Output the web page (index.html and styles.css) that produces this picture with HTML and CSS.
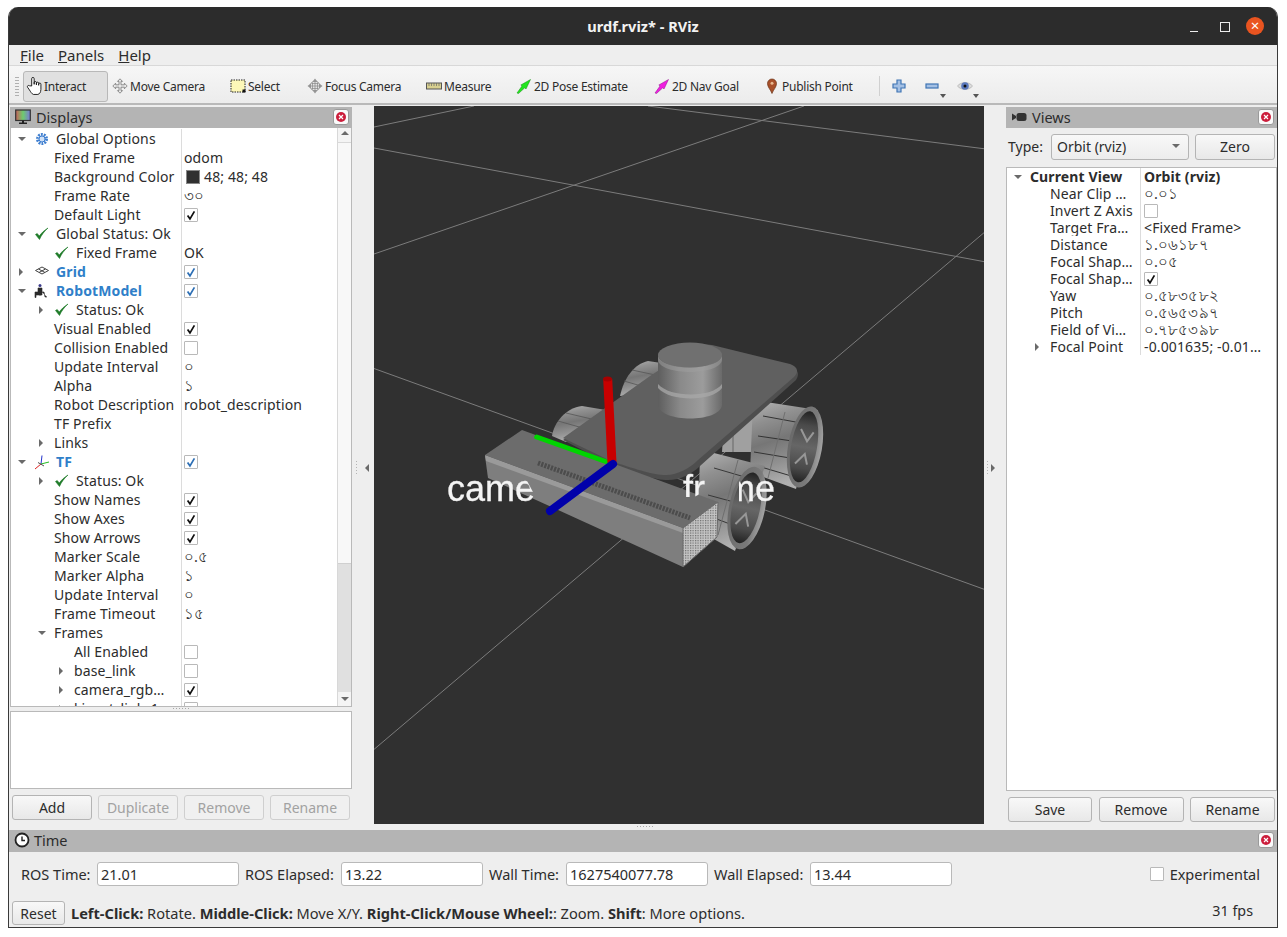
FILE: index.html
```html
<!DOCTYPE html>
<html lang="en">
<head>
<meta charset="utf-8">
<title>urdf.rviz* - RViz</title>
<link rel="stylesheet" href="styles.css">
</head>
<body>
<svg class="defs" aria-hidden="true">
  <symbol id="tick" viewBox="0 0 14 14"><path d="M3 7.500 L5.800 11.500 L11 2.800" fill="none" stroke="currentColor" stroke-width="2"/></symbol>
  <symbol id="ok" viewBox="0 0 16 16"><path d="M1.500 8.500 L5.500 13.500 C7.500 9 10 5.500 14 2 C10 4.500 7.500 7 5.300 10 L3.200 7.500 Z" fill="#1e7b28" stroke="#1e7b28" stroke-width=".6"/></symbol>
  <symbol id="close" viewBox="0 0 16 16"><rect x=".5" y=".5" width="15" height="15" rx="2.500" fill="#fafafa" stroke="#9a9a9a"/><circle cx="8" cy="8" r="5" fill="#cc1e3c"/><path d="M6 6 L10 10 M10 6 L6 10" stroke="#fff" stroke-width="1.200"/></symbol>
</svg>
<div class="window">
  <header class="titlebar">
    <span class="title">urdf.rviz* - RViz</span>
    <div class="winctl">
      <span class="min"></span><span class="max"></span><span class="xbtn">×</span>
    </div>
  </header>
  <nav class="menubar">
    <span><u>F</u>ile</span><span><u>P</u>anels</span><span><u>H</u>elp</span>
  </nav>
  <div class="toolbar">
    <span class="grip"></span>
    <div class="tool active">
      <svg class="ic hand" viewBox="1 1 13 16"><path d="M5 9 V2.500 a1.100 1.100 0 0 1 2.200 0 V7.500 V6 a1 1 0 0 1 2 0 V8 V6.600 a1 1 0 0 1 2 0 V8.400 V7.400 a1 1 0 0 1 2 0 V12 C13 15 12 16 10.500 16.500 H6.500 C5 16 4 14 3 12.500 L1.300 10 C.8 9 2 8 3 8.800 Z" fill="#fff" stroke="#111" stroke-width=".8"/></svg>
      <span>Interact</span>
    </div>
    <div class="tool">
      <svg class="ic" viewBox="0 0 16 16"><path d="M8 .8 L10.500 3.400 H9 V6.800 H12.400 V5.200 L15.200 8 L12.400 10.800 V9.200 H9 V12.600 H10.500 L8 15.200 L5.500 12.600 H7 V9.200 H3.600 V10.800 L.8 8 L3.600 5.200 V6.800 H7 V3.400 H5.500 Z" fill="#e8e8e8" stroke="#777" stroke-width=".8"/></svg>
      <span>Move Camera</span>
    </div>
    <div class="tool">
      <svg class="ic" viewBox="0 0 16 16"><rect x="1" y="2" width="14" height="12" fill="#fdf7b8" stroke="#222" stroke-width="1" stroke-dasharray="1.500 1"/><rect x="12.500" y="11.500" width="3" height="3" fill="#111"/></svg>
      <span>Select</span>
    </div>
    <div class="tool">
      <svg class="ic" viewBox="0 0 16 16"><path d="M8 .5 L10 3 H6 Z M8 15.500 L6 13 H10 Z M.5 8 L3 6 V10 Z M15.500 8 L13 10 V6 Z" fill="#999"/><circle cx="8" cy="8" r="4.800" fill="#e4e4e4" stroke="#888"/><path d="M8 3 V13 M3 8 H13 M5.500 5 V11 M10.500 5 V11 M5 5.500 H11 M5 10.500 H11" stroke="#888" stroke-width=".7"/></svg>
      <span>Focus Camera</span>
    </div>
    <div class="tool">
      <svg class="ic" viewBox="0 0 16 16"><rect x=".5" y="5" width="15" height="6" fill="#d8d090" stroke="#555"/><path d="M3 5 V8 M5.500 5 V8 M8 5 V8 M10.500 5 V8 M13 5 V8" stroke="#666" stroke-width=".7"/></svg>
      <span>Measure</span>
    </div>
    <div class="tool">
      <svg class="ic" viewBox="0 0 16 16"><path d="M1 15 L6 8 L4.800 7 L14.500 1.500 L10 11 L8.800 9.800 L2.500 15.500 Z" fill="#22e61e" stroke="#178c14" stroke-width=".5"/></svg>
      <span>2D Pose Estimate</span>
    </div>
    <div class="tool">
      <svg class="ic" viewBox="0 0 16 16"><path d="M1 15 L6 8 L4.800 7 L14.500 1.500 L10 11 L8.800 9.800 L2.500 15.500 Z" fill="#f01ee0" stroke="#8c148c" stroke-width=".5"/></svg>
      <span>2D Nav Goal</span>
    </div>
    <div class="tool">
      <svg class="ic" viewBox="0 0 16 16"><path d="M8 15.500 C6.500 11.500 3.500 9 3.500 5.500 A4.500 4.500 0 0 1 12.500 5.500 C12.500 9 9.500 11.500 8 15.500 Z" fill="#a8502a" stroke="#6b3317" stroke-width=".7"/><circle cx="8" cy="5.300" r="1.500" fill="#e8b890"/></svg>
      <span>Publish Point</span>
    </div>
    <span class="tsep"></span>
    <div class="tbtn">
      <svg class="ic" viewBox="0 0 16 16"><path d="M6 2 H10 V6 H14 V10 H10 V14 H6 V10 H2 V6 H6 Z" fill="#a4c0e4" stroke="#3f74b4" stroke-width="1.200"/></svg>
    </div>
    <div class="tbtn">
      <svg class="ic" viewBox="0 0 16 16"><rect x="2" y="6" width="12" height="4" fill="#a4c0e4" stroke="#3f74b4" stroke-width="1.200"/></svg>
      <span class="drop"></span>
    </div>
    <div class="tbtn">
      <svg class="ic" viewBox="0 0 16 16"><path d="M.5 8 C4 3.500 12 3.500 15.500 8 C12 12.500 4 12.500 .5 8 Z" fill="#dcdcdc" stroke="#aaa" stroke-width=".7"/><circle cx="8" cy="8" r="3.800" fill="#5a78bc"/><circle cx="8" cy="8" r="1.500" fill="#101010"/></svg>
      <span class="drop"></span>
    </div>
  </div>

  <main class="main">
    <section class="dock left">
      <div class="dockhead">
        <svg class="ic" viewBox="0 0 16 16"><defs><linearGradient id="rb" x1="0" x2="1"><stop offset="0" stop-color="#c8605a"/><stop offset=".5" stop-color="#6ecb6e"/><stop offset="1" stop-color="#7a78d8"/></linearGradient></defs><rect x=".7" y="1" width="14.600" height="10.500" fill="url(#rb)" stroke="#333" stroke-width="1.200"/><path d="M7 11.500 H9 V13.500 H12 V15 H4 V13.500 H7 Z" fill="#222"/></svg>
        <span class="dockname">Displays</span>
        <svg class="closeic"><use href="#close"/></svg>
      </div>
      <div class="treewrap">
        <div class="tree">
          <div class="row"><span class="name l0"><i class="arrow down"></i><svg class="ico" viewBox="0 0 16 16"><circle cx="8" cy="8" r="4.500" fill="none" stroke="#3f7fd0" stroke-width="3" stroke-dasharray="1.800 1"/><circle cx="8" cy="8" r="3" fill="#cfe0f5" stroke="#3f7fd0"/></svg>Global Options</span><span class="val"></span></div>
          <div class="row"><span class="name l1"><i class="arrow"></i>Fixed Frame</span><span class="val">odom</span></div>
          <div class="row"><span class="name l1"><i class="arrow"></i>Background Color</span><span class="val"><i class="swatch"></i>48; 48; 48</span></div>
          <div class="row"><span class="name l1"><i class="arrow"></i>Frame Rate</span><span class="val my">৩০</span></div>
          <div class="row"><span class="name l1"><i class="arrow"></i>Default Light</span><span class="val"><span class="cb"><svg><use href="#tick"/></svg></span></span></div>
          <div class="row"><span class="name l0"><i class="arrow down"></i><svg class="ico"><use href="#ok"/></svg>Global Status: Ok</span><span class="val"></span></div>
          <div class="row"><span class="name l1"><i class="arrow"></i><svg class="ico"><use href="#ok"/></svg>Fixed Frame</span><span class="val">OK</span></div>
          <div class="row"><span class="name l0"><i class="arrow right"></i><svg class="ico" viewBox="0 0 16 16"><path d="M8 3 L14.500 6.500 L8 10 L1.500 6.500 Z M4.500 5 L11 8.500 M11.500 5 L5 8.500" fill="none" stroke="#444" stroke-width="1"/></svg><b class="blue">Grid</b></span><span class="val"><span class="cb on"><svg><use href="#tick"/></svg></span></span></div>
          <div class="row"><span class="name l0"><i class="arrow down"></i><svg class="ico" viewBox="0 0 16 16"><circle cx="6" cy="2.500" r="1.500" fill="#3a3a8a"/><path d="M4 5 H8 V12 H2 V14.500 H1 V9 H4 Z M8 9 H10 L11 14 H13 M5 7 H7 V12 H5 Z" fill="#2a2a2a" stroke="#2a2a2a" stroke-width=".6"/></svg><b class="blue">RobotModel</b></span><span class="val"><span class="cb on"><svg><use href="#tick"/></svg></span></span></div>
          <div class="row"><span class="name l1"><i class="arrow right"></i><svg class="ico"><use href="#ok"/></svg>Status: Ok</span><span class="val"></span></div>
          <div class="row"><span class="name l1"><i class="arrow"></i>Visual Enabled</span><span class="val"><span class="cb"><svg><use href="#tick"/></svg></span></span></div>
          <div class="row"><span class="name l1"><i class="arrow"></i>Collision Enabled</span><span class="val"><span class="cb"></span></span></div>
          <div class="row"><span class="name l1"><i class="arrow"></i>Update Interval</span><span class="val my">০</span></div>
          <div class="row"><span class="name l1"><i class="arrow"></i>Alpha</span><span class="val my">১</span></div>
          <div class="row"><span class="name l1"><i class="arrow"></i>Robot Description</span><span class="val">robot_description</span></div>
          <div class="row"><span class="name l1"><i class="arrow"></i>TF Prefix</span><span class="val"></span></div>
          <div class="row"><span class="name l1"><i class="arrow right"></i>Links</span><span class="val"></span></div>
          <div class="row"><span class="name l0"><i class="arrow down"></i><svg class="ico" viewBox="0 0 16 16"><path d="M7 10 L8 1.500" stroke="#2233cc" fill="none"/><path d="M7 10 L15 8" stroke="#22bb22" fill="none"/><path d="M7 10 L1 15" stroke="#dd2222" fill="none"/><path d="M4 8.500 L10 12" stroke="#555" fill="none"/></svg><b class="blue">TF</b></span><span class="val"><span class="cb on"><svg><use href="#tick"/></svg></span></span></div>
          <div class="row"><span class="name l1"><i class="arrow right"></i><svg class="ico"><use href="#ok"/></svg>Status: Ok</span><span class="val"></span></div>
          <div class="row"><span class="name l1"><i class="arrow"></i>Show Names</span><span class="val"><span class="cb"><svg><use href="#tick"/></svg></span></span></div>
          <div class="row"><span class="name l1"><i class="arrow"></i>Show Axes</span><span class="val"><span class="cb"><svg><use href="#tick"/></svg></span></span></div>
          <div class="row"><span class="name l1"><i class="arrow"></i>Show Arrows</span><span class="val"><span class="cb"><svg><use href="#tick"/></svg></span></span></div>
          <div class="row"><span class="name l1"><i class="arrow"></i>Marker Scale</span><span class="val my">০.৫</span></div>
          <div class="row"><span class="name l1"><i class="arrow"></i>Marker Alpha</span><span class="val my">১</span></div>
          <div class="row"><span class="name l1"><i class="arrow"></i>Update Interval</span><span class="val my">০</span></div>
          <div class="row"><span class="name l1"><i class="arrow"></i>Frame Timeout</span><span class="val my">১৫</span></div>
          <div class="row"><span class="name l1"><i class="arrow down"></i>Frames</span><span class="val"></span></div>
          <div class="row"><span class="name l2"><i class="arrow"></i>All Enabled</span><span class="val"><span class="cb"></span></span></div>
          <div class="row"><span class="name l2"><i class="arrow right"></i>base_link</span><span class="val"><span class="cb"></span></span></div>
          <div class="row"><span class="name l2"><i class="arrow right"></i>camera_rgb…</span><span class="val"><span class="cb"><svg><use href="#tick"/></svg></span></span></div>
          <div class="row"><span class="name l2"><i class="arrow right"></i>kinect_link_1</span><span class="val"><span class="cb"></span></span></div>
        </div>
        <div class="vscroll">
          <span class="sbtn"><i class="arrow up"></i></span>
          <span class="thumb"></span>
          <span class="trough"></span>
          <span class="sbtn"><i class="arrow down"></i></span>
        </div>
      </div>
      <div class="hsplit"></div>
      <div class="helpbox"></div>
      <div class="btnrow four">
        <button class="btn">Add</button>
        <button class="btn off">Duplicate</button>
        <button class="btn off">Remove</button>
        <button class="btn off">Rename</button>
      </div>
    </section>

    <div class="sash"><span class="vsplit"></span><i class="arrow left"></i></div>

    <div class="center">
      <div class="view">
        <svg class="scene" viewBox="374 106 610 718" role="img" aria-label="3D view of robot model">
          <defs>
            <linearGradient id="cyl" x1="0" x2="1">
              <stop offset="0" stop-color="#5e5e5e"/><stop offset=".35" stop-color="#8a8a8a"/><stop offset=".7" stop-color="#9c9c9c"/><stop offset="1" stop-color="#6a6a6a"/>
            </linearGradient>
            <linearGradient id="band" x1="0" y1="0" x2=".25" y2="1">
              <stop offset="0" stop-color="#b4b4b4"/><stop offset=".25" stop-color="#909090"/><stop offset=".5" stop-color="#767676"/><stop offset=".75" stop-color="#909090"/><stop offset="1" stop-color="#b0b0b0"/>
            </linearGradient>
            <linearGradient id="hub" x1="0" y1="0" x2="0" y2="1">
              <stop offset="0" stop-color="#222"/><stop offset=".2" stop-color="#4a4a4a"/><stop offset=".5" stop-color="#666"/><stop offset=".8" stop-color="#4a4a4a"/><stop offset="1" stop-color="#222"/>
            </linearGradient>
            <linearGradient id="rim" x1="0" y1="0" x2="1" y2="0">
              <stop offset="0" stop-color="#6a6a6a"/><stop offset=".7" stop-color="#7a7a7a"/><stop offset="1" stop-color="#a4a4a4"/>
            </linearGradient>
            <pattern id="mesh" width="2.500" height="2.500" patternUnits="userSpaceOnUse"><rect width="2.500" height="2.500" fill="#c4c4c4"/><rect width="1.200" height="1.200" fill="#6c6c6c"/></pattern>
            <clipPath id="frameclip"><path d="M680 470 H706 V491 L694 497 H680 Z M706 470 H725 V480 H706 Z M739 470 H790 V510 H739 Z"/></clipPath>
            <clipPath id="cameclip"><path d="M440 460 H516 L534 494 V510 H440 Z"/></clipPath>
          </defs>
          <rect x="374" y="106" width="610" height="718" fill="#303030"/>
          <g class="gridlines">
            <path d="M374 127 L474 106"/><path d="M374 254 L804 106"/><path d="M374 148 L986 262"/>
            <path d="M648 106 L986 149"/><path d="M374 368.500 L986 590"/><path d="M374 749.400 L986 231"/>
          </g>
          <!-- rear-left wheel -->
          <path d="M620 396 C624 378 634 364 648 361 L668 364 L660 392 Z" fill="url(#band)"/>
          <path d="M624 381 L655 390 M632 370 L660 376" stroke="#555" stroke-width=".8"/>
          <!-- front-left wheel -->
          <path d="M552 436 C554 422 566 408 582 406 L606 410 L590 440 L566 442 Z" fill="url(#band)"/>
          <path d="M558 421 L590 430 M566 413 L600 421" stroke="#555" stroke-width=".8"/>
          <!-- axle between right wheels -->
          <path d="M724 420 L770 412 L768 452 L722 452 Z" fill="#a0a0a0"/>
          <path d="M733 428 V452 M757 430 V452" stroke="#666"/>
          <!-- back-right wheel -->
          <path d="M753 404 L766 402 L818 410 L796 489 L750 472 Z" fill="url(#band)"/>
          <path d="M763 416 L812 425 M758 436 L806 443 M754 452 L802 460 M751 464 L798 478" stroke="#333" stroke-width="1"/>
          <path d="M785 412 L768 478" stroke="#707070" stroke-width="1"/>
          <g transform="rotate(10 805 447)">
            <ellipse cx="805" cy="447" rx="17" ry="41" fill="url(#rim)"/>
            <ellipse cx="804" cy="447" rx="13" ry="36" fill="url(#hub)"/>
            <path d="M798 430 L806 441 L811 431 M798 465 L806 454 L810 464" stroke="#979797" stroke-width="2" fill="none"/>
          </g>
          <!-- front-right wheel -->
          <path d="M700 456 L710 452 L765 466 L735 551 L712 538 L698 520 Z" fill="url(#band)"/>
          <path d="M714 468 L755 480 M708 495 L745 505 M706 515 L738 527" stroke="#383838" stroke-width="1"/>
          <path d="M738 460 L718 535" stroke="#6e6e6e" stroke-width="1"/>
          <g transform="rotate(12 747 508)">
            <ellipse cx="747" cy="508" rx="18" ry="42" fill="url(#rim)"/>
            <ellipse cx="746" cy="508" rx="14" ry="36" fill="url(#hub)"/>
            <path d="M739 491 L747 502 L753 492 M739 526 L747 514 L752 526" stroke="#979797" stroke-width="2" fill="none"/>
          </g>
          <!-- plate -->
          <path d="M563 440 L650 378 L690 352 C694 348 702 346 712 347 L790 366 C798 369 800 374 796 380 L700 466 C692 474 680 480 668 480 C654 480 640 474 613 466 Z" fill="#4e4e4e"/>
          <path d="M563 438 L650 376 L690 350 C694 346 702 344 712 345 L790 364 C798 367 799 372 794 377 L698 460 C690 468 678 475 666 475 C652 475 640 470 613 462 Z" fill="#606060"/>
          <!-- cylinder -->
          <path d="M658 355 V405 C660 423 720 423 722 405 V355 Z" fill="url(#cyl)"/>
          <path d="M658 388 C670 402 712 402 722 388 V384 C712 398 670 398 658 384 Z" fill="#a8a8a8" opacity=".75"/>
          <path d="M658 355 C660 372 720 372 722 355 V360 C720 376 660 376 658 360 Z" fill="#a0a0a0" opacity=".5"/>
          <ellipse cx="690" cy="355" rx="32" ry="12.500" fill="#707070"/>
          <!-- camera block -->
          <path d="M485 455 L522 430 L718 502 L683 528 Z" fill="#6c6c6c"/>
          <path d="M485 456 L683 529 V567 L488 478 Z" fill="#7e7e7e"/>
          <path d="M485 455 L683 528 L683 533 L486 461 Z" fill="#9a9a9a"/>
          <path d="M683 528 L718 502 L717 537 L683 567 Z" fill="url(#mesh)" stroke="#6a6a6a"/>
          <path d="M538 463 L690 518" stroke="#4c4c4c" stroke-width="5" stroke-dasharray="2.200 1.200"/>
          <!-- labels -->
          <text class="lbl" x="447" y="501" clip-path="url(#cameclip)">came</text>
          <text class="lbl" x="683" y="501" clip-path="url(#frameclip)">frame</text>
          <!-- axes -->
          <path d="M536.700 437 L607 462" stroke="#00d400" stroke-width="5" stroke-linecap="round"/>
          <path d="M607.700 379 L612 463" stroke="#c80000" stroke-width="9"/>
          <ellipse cx="607.500" cy="379" rx="4.500" ry="2.500" fill="#a80000"/>
          <path d="M550 511 L613 464" stroke="#0000aa" stroke-width="8" stroke-linecap="round"/>
        </svg>
      </div>
      <div class="hsplit bottom"></div>
    </div>

    <div class="sash rightsash"><span class="vsplit"></span><i class="arrow right"></i></div>

    <section class="dock right">
      <div class="dockhead">
        <svg class="ic" viewBox="0 0 16 16"><path d="M1 4.500 L5 7 V9 L1 11.500 Z" fill="#333"/><rect x="5.500" y="4" width="10" height="8" rx="2.500" fill="#333"/></svg>
        <span class="dockname">Views</span>
        <svg class="closeic"><use href="#close"/></svg>
      </div>
      <div class="typerow">
        <span class="typelabel">Type:</span>
        <div class="combo"><span>Orbit (rviz)</span><i class="arrow down"></i></div>
        <button class="btn">Zero</button>
      </div>
      <div class="tree vtree">
        <div class="row"><span class="name l0"><i class="arrow down"></i><b>Current View</b></span><span class="val"><b>Orbit (rviz)</b></span></div>
        <div class="row"><span class="name l1"><i class="arrow"></i>Near Clip …</span><span class="val my">০.০১</span></div>
        <div class="row"><span class="name l1"><i class="arrow"></i>Invert Z Axis</span><span class="val"><span class="cb"></span></span></div>
        <div class="row"><span class="name l1"><i class="arrow"></i>Target Fra…</span><span class="val">&lt;Fixed Frame&gt;</span></div>
        <div class="row"><span class="name l1"><i class="arrow"></i>Distance</span><span class="val my">১.০৬১৮৭</span></div>
        <div class="row"><span class="name l1"><i class="arrow"></i>Focal Shap…</span><span class="val my">০.০৫</span></div>
        <div class="row"><span class="name l1"><i class="arrow"></i>Focal Shap…</span><span class="val"><span class="cb"><svg><use href="#tick"/></svg></span></span></div>
        <div class="row"><span class="name l1"><i class="arrow"></i>Yaw</span><span class="val my">০.৫৮৩৫৮২</span></div>
        <div class="row"><span class="name l1"><i class="arrow"></i>Pitch</span><span class="val my">০.৫৬৫৩৯৭</span></div>
        <div class="row"><span class="name l1"><i class="arrow"></i>Field of Vi…</span><span class="val my">০.৭৮৫৩৯৮</span></div>
        <div class="row"><span class="name l1"><i class="arrow right"></i>Focal Point</span><span class="val">-0.001635; -0.01…</span></div>
      </div>
      <div class="btnrow three">
        <button class="btn">Save</button>
        <button class="btn">Remove</button>
        <button class="btn">Rename</button>
      </div>
    </section>
  </main>

  <section class="timepanel">
    <div class="dockhead timehead">
      <svg class="ic" viewBox="0 0 16 16"><circle cx="8" cy="8" r="6.500" fill="#fff" stroke="#222" stroke-width="1.800"/><path d="M8 4.500 V8.500 H11" fill="none" stroke="#222" stroke-width="1.400"/></svg>
      <span class="timename">Time</span>
      <svg class="closeic"><use href="#close"/></svg>
    </div>
    <div class="timerow">
      <label>ROS Time:</label><span class="field">21.01</span>
      <label>ROS Elapsed:</label><span class="field">13.22</span>
      <label>Wall Time:</label><span class="field">1627540077.78</span>
      <label>Wall Elapsed:</label><span class="field">13.44</span>
      <span class="exp"><span class="cb"></span>Experimental</span>
    </div>
    <div class="statusrow">
      <button class="btn reset">Reset</button>
      <span class="hint"><b>Left-Click:</b> Rotate. <b>Middle-Click:</b> Move X/Y. <b>Right-Click/Mouse Wheel:</b>: Zoom. <b>Shift</b>: More options.</span>
      <span class="fps">31 fps</span>
    </div>
  </section>
</div>
</body>
</html>
```
FILE: styles.css
```css
* { box-sizing: border-box; }
html, body { margin: 0; padding: 0; background: #fff; }
body {
  font-family: "Noto Sans", "DejaVu Sans", sans-serif;
  font-size: 14px;
  color: #2c2c2c;
}
.defs { position: absolute; width: 0; height: 0; }
.window {
  width: 1270px;
  height: 921px;
  margin: 7px 0 0 8px;
  background: #eeeeee;
  border: 1px solid #3a3a3a;
  border-top: 0;
  border-radius: 10px 10px 0 0;
  overflow: hidden;
  display: flex;
  flex-direction: column;
}
.titlebar {
  height: 38px;
  flex: none;
  background: #2c2c2c;
  display: flex;
  align-items: center;
  justify-content: center;
  position: relative;
}
.title { color: #f2f2f2; font-weight: 700; font-size: 14.600px; }
.winctl {
  position: absolute;
  right: 13px;
  top: 10px;
  display: flex;
  align-items: center;
}
.min { width: 30px; height: 18px; position: relative; }
.min::after { content: ""; position: absolute; left: 8px; top: 14px; width: 8px; height: 1px; background: #eee; }
.max { width: 30px; height: 18px; position: relative; }
.max::after { content: ""; position: absolute; left: 8px; top: 5px; width: 8px; height: 8px; border: 1px solid #eee; }
.xbtn {
  width: 18px; height: 18px; margin-left: 4px;
  border-radius: 50%;
  background: #e95420;
  color: #fff;
  font-size: 15px;
  line-height: 17px;
  text-align: center;
}
.menubar {
  height: 21px;
  flex: none;
  display: flex;
  gap: 14px;
  padding-left: 11px;
  align-items: center;
  font-size: 15px;
  background: #eeeeee;
  border-bottom: 1px solid #d8d8d8;
}
.toolbar {
  height: 39px;
  flex: none;
  display: grid;
  grid-template-columns: 14px 86px 118px 77px 119px 90px 138px 110px 118px 1px 33px 33px 33px;
  align-items: center;
  background: linear-gradient(#f6f6f6, #ececec);
  border-bottom: 2px solid #b9b9b9;
  font-size: 12px;
  letter-spacing: -.25px;
  padding-top: 3px;
}
.grip {
  width: 4px; height: 20px; margin-left: 6px;
  background-image: radial-gradient(#b0b0b0 45%, transparent 50%);
  background-size: 2px 3px;
}
.tool { display: flex; align-items: center; gap: 2px; padding-left: 3px; height: 31px; white-space: nowrap; }
.tool.active {
  width: 85px;
  background: #e0e0e0;
  border: 1px solid #b8b8b8;
  border-radius: 3px;
  padding-left: 2px;
}
.ic { width: 16px; height: 16px; flex: none; }
.ic.hand { width: 17px; height: 18px; margin-right: -1px; }
.tsep { width: 1px; height: 20px; background: #d0d0d0; }
.tbtn { position: relative; height: 30px; display: flex; align-items: center; padding-left: 11px; }
.drop {
  position: absolute; left: 27px; bottom: 3px;
  border: 3px solid transparent; border-top: 4px solid #555; border-bottom: 0;
}
.main { height: 725px; flex: none; display: flex; }
.dock { display: flex; flex-direction: column; padding-top: 2px; }
.dock.left { width: 342px; margin-left: 1px; }
.dock.right { width: 271px; }
.dockhead {
  height: 21px;
  flex: none;
  background: #b4b4b4;
  display: flex;
  align-items: center;
  padding: 0 0 2px 5px;
  gap: 5px;
  font-size: 14.500px;
}
.closeic { width: 16px; height: 16px; margin-left: auto; margin-right: 3px; flex: none; }
.treewrap {
  height: 579px;
  flex: none;
  display: flex;
  background: #fff;
  border: 1px solid #b9b9b9;
  border-top: 0;
  overflow: hidden;
}
.tree { flex: 1; background: #fff; overflow: hidden; min-width: 0; padding-top: 1px; letter-spacing: .12px; }
.row { display: flex; height: 19px; line-height: 19px; white-space: nowrap; }
.name { width: 171px; flex: none; display: flex; align-items: center; overflow: hidden; border-right: 1px solid #dcdcdc; }
.name.l0 { padding-left: 0; }
.name.l1 { padding-left: 20px; }
.name.l2 { padding-left: 40px; }
.val { flex: 1; padding-left: 2px; display: flex; align-items: center; min-width: 0; overflow: hidden; }
.arrow { width: 23px; flex: none; position: relative; height: 10px; display: block; }
.arrow.down::after, .arrow.right::after, .arrow.up::after, .arrow.left::after { content: ""; position: absolute; width: 0; height: 0; }
.arrow.down::after { left: 7px; top: 3px; border: 4px solid transparent; border-top: 4px solid #6a6a6a; border-bottom: 0; }
.arrow.right::after { left: 8px; top: 1px; border: 4px solid transparent; border-left: 4px solid #6a6a6a; border-right: 0; }
.arrow.up::after { left: 3px; top: 3px; border: 4px solid transparent; border-bottom: 4px solid #6a6a6a; border-top: 0; }
.arrow.left::after { left: 0; top: 1px; border: 4px solid transparent; border-right: 4px solid #6a6a6a; border-left: 0; }
.ico { width: 16px; height: 16px; flex: none; margin-right: 6px; }
.blue { color: #2f7fc9; }
.swatch { width: 14px; height: 14px; background: #303030; border: 1px solid #888; margin: 0 4px 0 2px; flex: none; }
.cb {
  width: 14px; height: 14px; flex: none;
  background: #fff;
  border: 1px solid #b9b9b9;
  border-radius: 1px;
  color: #111;
  display: block;
}
.cb svg { width: 12px; height: 12px; display: block; }
.cb.on { color: #2d6fb5; }
.my { font-family: "Noto Sans", sans-serif; font-size: 14.500px; color: #333; }
.vscroll { width: 14px; flex: none; display: flex; flex-direction: column; border-left: 1px solid #d8d8d8; }
.sbtn { height: 14px; flex: none; background: #f4f4f4; display: block; }
.sbtn .arrow { width: 13px; height: 14px; }
.sbtn .arrow.down::after { left: 3px; top: 5px; }
.thumb { height: 422px; flex: none; background: #f8f8f8; border-top: 1px solid #d8d8d8; border-bottom: 1px solid #d0d0d0; }
.trough { flex: 1; background: #e0e0e0; }
.hsplit {
  height: 4px; width: 18px; flex: none; margin: 0 auto;
  background-image: radial-gradient(#a8a8a8 40%, transparent 45%);
  background-size: 3px 3px;
  background-repeat: repeat-x;
}
.helpbox { height: 78px; flex: none; background: #fff; border: 1px solid #b9b9b9; }
.btnrow { display: grid; flex: none; height: 25px; margin-top: 6px; }
.btnrow.four { grid-template-columns: 80px 80px 80px 80px; gap: 6px; padding-left: 2px; }
.btnrow.three { grid-template-columns: 84px 85px 85px; gap: 7px 6.500px; padding-left: 2px; }
.btn {
  font: inherit;
  color: #2c2c2c;
  background: linear-gradient(#f8f8f8, #e8e8e8);
  border: 1px solid #b4b4b4;
  border-radius: 3px;
  padding: 0;
  height: 25px;
}
.btn.off { color: #a2a2a2; background: #f0f0f0; border-color: #cfcfcf; }
.sash { width: 22px; flex: none; display: flex; align-items: center; gap: 7px; padding-left: 3px; }
.sash .arrow { width: 6px; }
.vsplit {
  width: 3px; height: 15px; flex: none;
  background-image: radial-gradient(#b4b4b4 40%, transparent 45%);
  background-size: 3px 3px;
}
.rightsash { gap: 2px; padding-left: 2px; }
.rightsash .arrow.right::after { left: 0; }
.center { width: 610px; flex: none; padding-top: 1px; }
.view { width: 610px; height: 718px; background: #303030; }
.hsplit.bottom { margin: 1px 0 0 262px; }
.scene { width: 610px; height: 718px; display: block; }
.gridlines path { stroke: #7c7c7c; stroke-width: 1; fill: none; }
.lbl { font-family: "Liberation Sans", sans-serif; font-size: 36px; fill: #f4f4f4; stroke: #f4f4f4; stroke-width: .3px; filter: blur(.5px); }
.typerow { display: flex; align-items: center; height: 26px; margin-top: 6px; flex: none; padding-left: 2px; }
.typelabel { width: 43px; flex: none; padding-bottom: 2px; }
.combo {
  width: 138px; height: 26px; flex: none;
  background: linear-gradient(#f8f8f8, #ececec);
  border: 1px solid #b4b4b4;
  border-radius: 3px;
  display: flex;
  align-items: center;
  justify-content: space-between;
  padding: 0 0 2px 5px;
}
.combo .arrow { width: 20px; }
.combo .arrow.down::after { left: 4px; }
.typerow .btn { width: 80px; height: 26px; margin-left: 6px; padding-bottom: 2px; }
.vtree {
  height: 624px; flex: none; margin-top: 7px; padding-top: 0;
  border: 1px solid #b9b9b9;
}
.vtree .row { height: 17px; line-height: 17px; }
.vtree .name { width: 134px; }
.vtree .val { padding-left: 3px; }
.timepanel { flex: 1; display: flex; flex-direction: column; }
.timehead { height: 22px; padding-left: 5px; gap: 4px; }
.timename { font-size: 14.500px; }
.timerow {
  display: grid;
  grid-template-columns: 88px 142px 102px 142px 83px 142px 102px 142px 1fr;
  align-items: center;
  height: 24px;
  margin-top: 10px;
  flex: none;
  font-size: 14.500px;
}
.timerow label { padding-left: 6px; white-space: nowrap; }
.timerow label:first-child { padding-left: 12px; }
.field {
  height: 24px;
  background: #fff;
  border: 1px solid #b9b9b9;
  border-radius: 3px;
  padding-left: 3px;
  line-height: 22px;
}
.exp { display: flex; align-items: center; gap: 6px; justify-content: flex-end; padding-right: 17px; white-space: nowrap; }
.statusrow { display: flex; align-items: center; height: 24px; margin-top: 15px; padding-left: 3px; flex: none; }
.reset { width: 53px; height: 24px; flex: none; }
.hint { margin-left: 6px; white-space: nowrap; font-size: 14.600px; }
.fps { margin-left: auto; margin-right: 24px; margin-top: -6px; font-size: 14.300px; }
```
